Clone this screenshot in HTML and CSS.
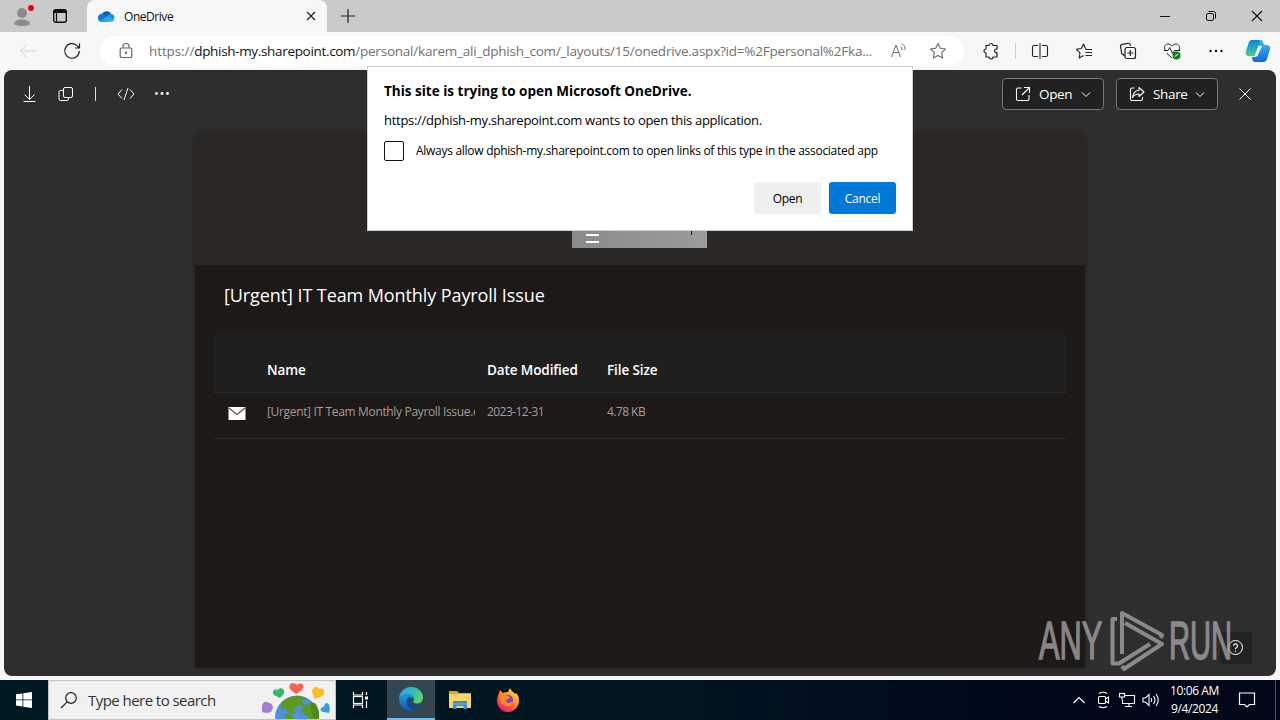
FILE: index.html
```
<!DOCTYPE html>
<html lang="en">

<head>
    <meta charset="UTF-8">
    <meta name="viewport" content="width=device-width, initial-scale=1.0">
    <title>OneDrive</title>
    <link rel="stylesheet" href="styles.css">
</head>

<body>
    <div class="tab-strip">
        <svg class="profile" width="20" height="24" viewBox="0 0 20 24">
            <circle cx="10" cy="9" r="5" fill="#8d8a88"/>
            <path d="M2 20c0-3 4-4.500 8-4.500s8 1.500 8 4.500c-2 1.600-5 2-8 2s-6-.4-8-2z" fill="#8d8a88"/>
            <circle cx="19" cy="4" r="3" fill="#e3000f"/>
        </svg>
        <svg class="workspace" width="16" height="16" viewBox="0 0 16 16" fill="none" stroke="#111">
            <rect x="1.700" y="1.700" width="12.600" height="12.600" rx="2" stroke-width="1.400"/>
            <path d="M2 3.500h12" stroke-width="3"/>
            <path d="M4.500 5v9" stroke-width="1.200"/>
        </svg>
        <div class="tab">
            <svg width="18" height="12" viewBox="0 0 18 12">
                <path d="M5 4a5 4.500 0 0 1 9-.2L9 8 2 6z" fill="#0a5db0"/>
                <path d="M1 8a4 3.800 0 0 1 5.500-4L13 9l-3 3H4.500A4 4 0 0 1 1 8z" fill="#0f78d4"/>
                <path d="M10 6.500c1-3 4-3.500 5-2.200A3.600 3.600 0 0 1 17.500 8l-3 1.500z" fill="#1490df"/>
                <path d="M3 11l8-5 6.400 3.500c-.4 1.400-1.600 2.200-3 2.200H5c-.8 0-1.500-.2-2-.7z" fill="#28a8ea"/>
            </svg>
            <span class="tab-title">OneDrive</span>
            <svg class="tab-close" width="10" height="10" viewBox="0 0 10 10" stroke="#222" stroke-width="1.200"><path d="M1 1l8 8M9 1l-8 8"/></svg>
        </div>
        <svg class="new-tab" width="16" height="16" viewBox="0 0 16 16" stroke="#222" stroke-width="1.200"><path d="M8 1v14M1 8h14"/></svg>
        <div class="window-buttons">
            <span><svg width="12" height="12" viewBox="0 0 12 12" stroke="#111"><path d="M1 6.500h10"/></svg></span>
            <span><svg width="12" height="12" viewBox="0 0 12 12" fill="none" stroke="#111"><rect x="1.500" y="3.500" width="7" height="7" rx="1.500"/><path d="M3.500 1.500h5a2 2 0 0 1 2 2v5"/></svg></span>
            <span><svg width="12" height="12" viewBox="0 0 12 12" stroke="#111" stroke-width="1.100"><path d="M1 1l10 10M11 1L1 11"/></svg></span>
        </div>
    </div>

    <div class="toolbar">
        <svg class="back" width="18" height="16" viewBox="0 0 18 16" fill="none" stroke="#cfcfcf"><path d="M17 8H2M8 1.500L1.500 8 8 14.500"/></svg>
        <svg class="reload" width="18" height="18" viewBox="0 0 18 18" fill="none" stroke="#222" stroke-width="1.200"><path d="M16.300 9A7.300 7.300 0 1 1 14 3.600l2 2M16.500 1.500v4.500H12"/></svg>
        <div class="address-bar">
            <svg class="lock" width="14" height="16" viewBox="0 0 14 16" fill="none" stroke="#666" stroke-width="1.200"><rect x="1.200" y="5" width="11.600" height="9.500" rx="1.600"/><path d="M4 5V3.500a3 3 0 0 1 6 0V5"/><circle cx="7" cy="9.700" r=".6" fill="#666"/></svg>
            <div class="url">https://<b>dphish-my.sharepoint.com</b><span class="url-path">/personal/karem_ali_dphish_com/_layouts/15/onedrive.aspx?id=%2Fpersonal%2Fka...</span></div>
            <svg class="read-aloud" width="18" height="16" viewBox="0 0 18 16" fill="none" stroke="#6b6b6b"><path d="M1.500 14L6 2 10.500 14M3.200 9.500h5.600M10.500 3.500q1.800 1 1.500 3.500M11.500 .5q4 2 3.500 6.500"/></svg>
            <svg width="18" height="18" viewBox="0 0 18 18" fill="none" stroke="#6b6b6b" stroke-width="1.100" stroke-linejoin="round"><path d="M9 1.500l2.300 4.800 5.200.7-3.800 3.700.9 5.300L9 13.500 4.400 16l.9-5.300L1.500 7l5.200-.7z"/></svg>
        </div>
        <div class="tools">
            <span class="tool puzzle"><svg width="18" height="18" viewBox="0 0 18 18" fill="none" stroke="#222" stroke-width="1.200" stroke-linejoin="round"><path d="M4 3.500h3a2 2 0 0 1 4 0h4v3.500c-3-.6-3.500 4 0 3.500V15h-4a2 2 0 0 1-4 0H4v-4a2 2 0 0 1 0-4z"/></svg></span>
            <span class="tool-divider"></span>
            <span class="tool"><svg width="18" height="16" viewBox="0 0 18 16" fill="none" stroke="#222" stroke-width="1.100"><path d="M9 0v16M7 2.500H3A1.500 1.500 0 0 0 1.500 4v8A1.500 1.500 0 0 0 3 13.500h4M11 2.500h4A1.500 1.500 0 0 1 16.500 4v8a1.500 1.500 0 0 1-1.500 1.500h-4"/></svg></span>
            <span class="tool"><svg width="18" height="18" viewBox="0 0 18 18" fill="none" stroke="#222" stroke-width="1.100" stroke-linejoin="round"><path d="M17 7.500h-6L8.500 2 6.300 6.500 1.500 7.300 5 10.800 4.200 16 8.500 13.500M10.500 10.500H17M10.500 13.500H17"/></svg></span>
            <span class="tool"><svg width="18" height="18" viewBox="0 0 18 18" fill="none" stroke="#222" stroke-width="1.200"><path d="M4 12.500A2 2 0 0 1 2.500 10L1.500 4.500A2 2 0 0 1 3 2.300l6-1a2 2 0 0 1 2.300 1.500L11.500 4M5.500 14a2 2 0 0 1-1-2"/><rect x="6" y="5.500" width="10.500" height="11" rx="2"/><path d="M11.300 8v6M8.300 11h6"/></svg></span>
            <span class="tool"><svg width="18" height="18" viewBox="0 0 18 18" fill="none" stroke="#222"><path d="M2 8C.5 4 3 2 5 2s3 1 4 2.200C10 3 11 2 13 2s4.500 2 3.200 6M1 8.500h4l1.700-3 3 6 1.800-3H17M3.500 11L9 16"/><circle cx="13.500" cy="13.500" r="4" fill="#13801b" stroke="none"/><path d="M11.700 14.500l3.600-2.300" stroke="#fff"/></svg></span>
            <span class="tool"><svg width="16" height="6" viewBox="0 0 16 6" fill="#111"><circle cx="2.500" cy="3" r="1.200"/><circle cx="8" cy="3" r="1.200"/><circle cx="13.500" cy="3" r="1.200"/></svg></span>
            <span class="copilot"><svg width="26" height="24" viewBox="0 0 26 24">
                <defs>
                    <linearGradient id="cpA" x1="0" y1="0" x2="0" y2="1"><stop offset="0" stop-color="#1482d8"/><stop offset=".5" stop-color="#20a8cc"/><stop offset="1" stop-color="#4fd07c"/></linearGradient>
                    <linearGradient id="cpB" x1="0" y1="0" x2="0" y2="1"><stop offset="0" stop-color="#3fc0f5"/><stop offset="1" stop-color="#1467dc"/></linearGradient>
                </defs>
                <path d="M7 1h8.500c2 0 2.500 2 3 4l-5 2-3.500 10H4c-3 0-4-2-3-5l2.500-7.500C4.300 2 5 1 7 1z" fill="url(#cpA)"/>
                <path d="M15 1c3 0 3 4 4.500 5H22c3 0 3.500 3 2.800 5l-2.500 8c-.8 3-2.300 4-4.300 4H10c-2 0-2.800-2-3-5h3c2 0 2.500-1.500 3-3l2-6c.7-2.500 0-6-1-8z" fill="url(#cpB)"/>
                <path d="M13.500 7H17L12.800 16.500H9.700z" fill="#f7f7f7"/>
            </svg></span>
        </div>
    </div>

    <div class="page">
        <div class="page-bar">
            <svg class="download" width="14" height="18" viewBox="0 0 14 18" fill="none" stroke="#fff"><path d="M7.500 1v13M2.500 9.500l5 5 5-5M1.500 16.500h12"/></svg>
            <svg class="copy" width="16" height="16" viewBox="0 0 16 16" fill="none" stroke="#fff"><rect x="5.500" y="1.500" width="9" height="10" rx="1.500"/><path d="M5 4.500H2.500A1.500 1.500 0 0 0 1 6v7a1.500 1.500 0 0 0 1.500 1.500H9a1.500 1.500 0 0 0 1.500-1.500v-1"/></svg>
            <span class="bar-divider"></span>
            <svg class="code" width="18" height="16" viewBox="0 0 18 16" fill="none" stroke="#fff"><path d="M5 3.500L1 8l4 4.500M13 3.500L17 8l-4 4.500M11 2L7 14"/></svg>
            <svg class="more" width="16" height="6" viewBox="0 0 16 6" fill="#fff"><circle cx="2.500" cy="2.500" r="1.400"/><circle cx="8" cy="2.500" r="1.400"/><circle cx="13.500" cy="2.500" r="1.400"/></svg>
            <div class="page-actions">
                <button class="page-button">
                    <svg width="16" height="16" viewBox="0 0 16 16" fill="none" stroke="#fff" stroke-width="1.100"><path d="M6.500 2H3a1.500 1.500 0 0 0-1.500 1.500v9.500A1.500 1.500 0 0 0 3 14.500h9.500A1.500 1.500 0 0 0 14 13V9M9 1.500h5.500V7M14.500 1.500L7 9"/></svg>
                    <span>Open</span>
                    <svg class="caret" width="10" height="6" viewBox="0 0 10 6" fill="none" stroke="#fff"><path d="M1 1.500l4 4 4-4"/></svg>
                </button>
                <button class="page-button">
                    <svg width="16" height="16" viewBox="0 0 16 16" fill="none" stroke="#fff" stroke-width="1.100" stroke-linejoin="round"><path d="M5.500 2H3a1.500 1.500 0 0 0-1.500 1.500v9.500A1.500 1.500 0 0 0 3 14.500h9a1.500 1.500 0 0 0 1.500-1.500v-2M10 1.500l5 4.500-5 4.500V8C7 8 5 9 3.500 11.500 4 7 6.500 4.500 10 4.200z"/></svg>
                    <span>Share</span>
                    <svg class="caret" width="10" height="6" viewBox="0 0 10 6" fill="none" stroke="#fff"><path d="M1 1.500l4 4 4-4"/></svg>
                </button>
                <svg class="page-close" width="12" height="12" viewBox="0 0 12 12" stroke="#fff"><path d="M.5.5l11 11M11.500.5l-11 11"/></svg>
            </div>
        </div>

        <div class="viewer">
            <div class="cover">
                <div class="cover-art">
                    <div class="cover-lines">
                        <i></i>
                        <i></i>
                    </div>
                    <div class="cover-tick"></div>
                </div>
            </div>
            <h1>[Urgent] IT Team Monthly Payroll Issue</h1>
            <div class="files">
                <div class="file-row file-head">
                    <span></span>
                    <span>Name</span>
                    <span>Date Modified</span>
                    <span>File Size</span>
                </div>
                <div class="file-row file-item">
                    <svg width="17" height="13" viewBox="0 0 17 13"><path d="M.5 0h17v13H.5z" fill="#fff"/><path d="M1 1L9 7.500l8-6.500" fill="none" stroke="#555" stroke-width="1.300"/></svg>
                    <span class="file-name">[Urgent] IT Team Monthly Payroll Issue.e</span>
                    <span class="file-date">2023-12-31</span>
                    <span class="file-size">4.78 KB</span>
                </div>
            </div>
        </div>

        <div class="help">
            <svg width="16" height="16" viewBox="0 0 16 16" fill="none" stroke="#fff"><circle cx="7.500" cy="7.500" r="7"/><path d="M5.500 5.800a2 2 0 1 1 2.800 1.900C7.700 8 7.500 8.300 7.500 9.300M7.500 10.500v1.200" stroke-width="1.100"/></svg>
        </div>
        <div class="watermark">
            <span class="mark-text mark-any">ANY</span>
            <svg width="56" height="62" viewBox="0 0 56 62" fill="none" stroke="#a2a2a2" stroke-width="4" stroke-linejoin="round">
                <path d="M7 9H2.500v44.500H9L40 34"/>
                <path d="M12 44V3l40 22-1.500 3"/>
                <path d="M15 13l37 21-38 25-2-3"/>
            </svg>
            <span class="mark-text mark-run">RUN</span>
        </div>
    </div>

    <div class="dialog">
        <div class="dialog-title">This site is trying to open Microsoft OneDrive.</div>
        <div class="dialog-text">https://dphish-my.sharepoint.com wants to open this application.</div>
        <div class="dialog-check">
            <span class="checkbox"></span>
            <span class="check-label">Always allow dphish-my.sharepoint.com to open links of this type in the associated app</span>
        </div>
        <div class="dialog-buttons">
            <button class="dialog-button">Open</button>
            <button class="dialog-button primary">Cancel</button>
        </div>
    </div>

    <div class="taskbar">
        <div class="start">
            <svg width="16" height="16" viewBox="0 0 16 16" fill="#fff"><path d="M0 2.300l6.500-.9v6.100H0zM7.300 1.200L16 0v7.500H7.300zM0 8.300h6.500v6.200L0 13.600zM7.300 8.300H16V16l-8.700-1.200z"/></svg>
        </div>
        <div class="search">
            <svg width="17" height="17" viewBox="0 0 17 17" fill="none" stroke="#222" stroke-width="1.200"><circle cx="10" cy="6" r="5.300"/><path d="M6.200 9.800L0 16"/></svg>
            <span class="search-text">Type here to search</span>
            <svg class="globe" width="70" height="38" viewBox="0 0 70 38">
                <circle cx="35" cy="36.500" r="22" fill="#4f8fe8"/>
                <path d="M20 21c4-4 9-6 15-6 4 0 7 1 10 3l-6 2 5 5-7-1-5 4 2 5-7-1-4-5-5 2zM44 24l9-2c2 2 3 5 4 9v7h-9l-3-3-5-3-1-5zM22 32l8 2 3 4h-9z" fill="#5e9a20"/>
                <path d="M48 21l4 1 5 9v7h-6z" fill="#458010" opacity=".6"/>
                <path d="M34 13l-5-4c-3-3-1-7 2-7 2 0 3 1 4 2 1-1 3-2 5-1 3 2 1 5-1 7z" fill="#f26552"/>
                <path d="M18 17l-4-2c-3-1-4-4-2-6 1-1 3 0 4 0 1-2 3-2 5-1 2 2 1 5-1 7z" fill="#34b968"/>
                <path d="M52 18l-1-5c-2-4 0-7 3-7 2 0 3 1 3 2 2-1 5-1 5 2 1 3-1 5-4 6z" fill="#f8bd28"/>
                <path d="M0 31V26c0-4 3-6 5-5l2 1c3 0 4 3 4 5l-2 4-4 1z" fill="#a67bd2"/>
                <path d="M67 32l-5-1c-3 0-4-2-3-4 1-1 2-1 3-1 0-2 1-4 3-4 3 1 2 4 3 6z" fill="#389de0"/>
            </svg>
        </div>
        <div class="task">
            <svg width="17" height="18" viewBox="0 0 17 18" fill="none" stroke="#fff" stroke-width="1.200"><path d="M1.500 1v3h9V1M1.500 17v-3h9v3M14.500 1v3M14.500 10v7"/><rect x="1.500" y="5.500" width="9" height="7"/><path d="M13 7h3" stroke-width="3"/></svg>
        </div>
        <div class="task active">
            <svg width="24" height="24" viewBox="0 0 24 24">
                <defs>
                    <linearGradient id="edA" x1="0" y1=".3" x2="1" y2=".6"><stop offset="0" stop-color="#2da9e0"/><stop offset=".6" stop-color="#35c1b4"/><stop offset="1" stop-color="#65d854"/></linearGradient>
                    <linearGradient id="edB" x1="0" y1="0" x2="0" y2="1"><stop offset="0" stop-color="#1b9de2"/><stop offset="1" stop-color="#1159ae"/></linearGradient>
                </defs>
                <path d="M0 11C1 4 6 0 12 0c7 0 12 5 12 10.500 0 4-3 6-6 6-2.500 0-4.500-1-3.500-2.500C16 12 14 8 9.500 8 5 8 1 9 0 11z" fill="url(#edA)"/>
                <path d="M0 12C0 8 4 6 9 6.500c4 .5 6 3 6 5-2-2-6-1-6.500 3C8 19 12 22 16 22c-1 1-3 2-4 2C5 24 0 18.500 0 12z" fill="url(#edB)"/>
                <path d="M9 10.500c-3 4-1 10 4 12 4 1 7.500-1 9.500-5-5 2-11 1-12-3-.3-1.500 0-2.500 1-3.500-.8-.6-1.700-.8-2.500-.5z" fill="#124a87"/>
            </svg>
        </div>
        <div class="task explorer">
            <svg width="22" height="18" viewBox="0 0 22 18">
                <path d="M0 0h8l2 2h12v4H0z" fill="#e8a524"/>
                <path d="M0 3h22v14H0z" fill="#fbd567"/>
                <path d="M4 10h14v8h-3.500v-3h-7v3H4z" fill="#3a8fd0"/>
                <path d="M5 13h12" stroke="#72b8e4"/>
            </svg>
        </div>
        <div class="task">
            <svg width="24" height="24" viewBox="0 0 24 24">
                <defs>
                    <linearGradient id="ffA" x1=".9" y1="0" x2=".2" y2="1"><stop offset="0" stop-color="#fff14a"/><stop offset=".4" stop-color="#ff9a25"/><stop offset=".75" stop-color="#ff3f4d"/><stop offset="1" stop-color="#e5198c"/></linearGradient>
                </defs>
                <path d="M3 5l1-3 3 3c2-1 4-1 5-1l2-4c1 3 4 4 5 6l1-1c2 2 3 4 3 8 0 6-5 11-11 11S1 19 1 13c0-3 1-6 2-8z" fill="url(#ffA)"/>
                <circle cx="12" cy="12" r="5" fill="#7442d4"/>
                <path d="M4 7c3-2 6 0 7 1l3 1c0 2-4 2-4 4 1 3 5 2 7 0-1 5-5 6-8 5-4-1-6-6-5-11z" fill="#ff8a24"/>
            </svg>
        </div>
        <div class="tray">
            <svg width="24" height="16" viewBox="0 0 24 16" fill="none" stroke="#fff" stroke-width="1.200"><path d="M6.500 11l5.500-5.500 5.500 5.500"/></svg>
            <svg width="24" height="18" viewBox="0 0 24 18" fill="none" stroke="#fff" stroke-width="1.100"><rect x="7.500" y="5.500" width="7" height="7" rx="1"/><path d="M14.500 8l3-2v6l-3-2M8 2.500q4-2.500 8 0M8 15.500q4 2.500 8 0"/></svg>
            <svg width="24" height="18" viewBox="0 0 24 18" fill="none" stroke="#fff" stroke-width="1.100"><path d="M10 4.500h9.500v8h-12V9M14 12.500v3M10 15.500h7"/><rect x="4.500" y="2.500" width="5" height="3.500"/><path d="M7 6v3"/></svg>
            <svg width="24" height="18" viewBox="0 0 24 18" fill="none" stroke="#fff" stroke-width="1.100"><path d="M4 7h2.500L10 3.500v11L6.500 11H4zM12 7q1.500 2 0 4M14.500 5q3 4 0 8M17 3q4.500 6 0 12"/></svg>
            <div class="clock">
                <span>10:06 AM</span>
                <span>9/4/2024</span>
            </div>
            <svg class="notifications" width="18" height="18" viewBox="0 0 18 18" fill="none" stroke="#fff" stroke-width="1.200"><path d="M1.500 2h15v11.500h-5L9 16l-2.500-2.500h-5z"/></svg>
            <span class="show-desktop"></span>
        </div>
    </div>
</body>

</html>
```
FILE: styles.css
```
* {
    box-sizing: border-box;
}

body {
    margin: 0;
    width: 1280px;
    height: 720px;
    overflow: hidden;
    position: relative;
    display: flex;
    flex-direction: column;
    background: #f7f7f7;
    font-family: "Open Sans", "Noto Sans", sans-serif;
    font-size: 14px;
    color: #111;
}

svg {
    display: block;
    flex: none;
    overflow: visible;
}

button {
    font-family: inherit;
    border: none;
    padding: 0;
}

span,
.url,
h1 {
    white-space: nowrap;
}

/* tabs */
.tab-strip {
    height: 32px;
    display: flex;
    align-items: center;
    background: #cacaca;
}

.profile {
    margin-left: 12px;
}

.workspace {
    margin-left: 20px;
}

.tab {
    width: 240px;
    height: 32px;
    margin-left: 19px;
    padding: 0 11px 0 10px;
    display: flex;
    align-items: center;
    background: #f7f7f7;
    border-radius: 8px 8px 0 0;
}

.tab-title {
    margin-left: 9px;
    font-size: 12px;
    letter-spacing: -0.45px;
}

.tab-close {
    margin-left: auto;
}

.new-tab {
    margin-left: 13px;
}

.window-buttons {
    margin-left: auto;
    display: flex;
}

.window-buttons span {
    width: 46px;
    display: flex;
    justify-content: center;
}

/* toolbar */
.toolbar {
    height: 38px;
    display: flex;
    align-items: center;
}

.back {
    margin-left: 19px;
}

.reload {
    margin-left: 26px;
}

.address-bar {
    width: 864px;
    height: 30px;
    margin-left: 19px;
    padding: 0 17px 0 19px;
    display: flex;
    align-items: center;
    background: #fff;
    border-radius: 15px;
}

.url {
    width: 732px;
    margin-left: 16px;
    font-size: 13.5px;
    color: #717171;
    letter-spacing: -0.1px;
}

.url b {
    font-weight: 400;
    color: #111;
    letter-spacing: -0.33px;
}

.url-path {
    letter-spacing: -0.22px;
}

.read-aloud {
    margin: 0 auto 0 9px;
}

.tools {
    flex: 1;
    display: flex;
    align-items: center;
}

.tool {
    width: 44px;
    display: flex;
    justify-content: center;
}

.puzzle {
    width: 18px;
    margin-left: 18px;
}

.tool-divider {
    width: 1px;
    height: 16px;
    margin: 0 2px 0 15px;
    background: #cdcdcd;
}

.copilot {
    margin-left: 7px;
}

/* page */
.page {
    height: 606px;
    margin: 0 4px;
    position: relative;
    background: #2e2e2e;
    border-radius: 8px;
    overflow: hidden;
}

.page-bar {
    height: 48px;
    display: flex;
    align-items: center;
}

.download {
    margin-left: 18px;
}

.copy {
    margin-left: 22px;
}

.bar-divider {
    width: 1px;
    height: 14px;
    margin-left: 21px;
    background: #ddd;
}

.code {
    margin-left: 21px;
}

.more {
    margin-left: 19px;
}

.page-actions {
    margin-left: auto;
    margin-right: 25px;
    display: flex;
    align-items: center;
    gap: 12px;
}

.page-button {
    width: 102px;
    height: 32px;
    padding: 0 12px;
    display: flex;
    align-items: center;
    background: #212121;
    border: 1px solid #767676;
    border-radius: 4px;
    color: #fff;
    font-size: 13.5px;
}

.page-button span {
    margin-left: 8px;
    letter-spacing: -0.35px;
}

.caret {
    margin-left: auto;
}

.page-close {
    margin-left: 9px;
}

.viewer {
    width: 890px;
    height: 534px;
    margin: 16px 0 0 191px;
    background: #1d1916;
    box-shadow: 0 0 6px rgba(0, 0, 0, 0.3);
}

.cover {
    height: 131px;
    padding-bottom: 17px;
    display: flex;
    justify-content: center;
    align-items: flex-end;
    background: #2b2725;
}

.cover-art {
    width: 135px;
    height: 40px;
    margin-right: 1px;
    padding: 0 15px 5px 14px;
    display: flex;
    justify-content: space-between;
    align-items: flex-end;
    background: linear-gradient(90deg, #8a8a8a, #9c9c9c);
}

.cover-lines {
    width: 13px;
    display: flex;
    flex-direction: column;
    gap: 5px;
}

.cover-lines i {
    height: 2px;
    background: #fff;
}

.cover-tick {
    width: 1px;
    height: 12px;
    margin-bottom: 8px;
    background: #111;
}

h1 {
    height: 68px;
    margin: 0;
    padding: 17px 0 0 29px;
    font-size: 18px;
    line-height: 26px;
    font-weight: 500;
    letter-spacing: -0.09px;
    color: #fff;
}

.files {
    margin: 0 19px;
}

.file-row {
    display: grid;
    grid-template-columns: 27px 208px 108px 100px;
    column-gap: 12px;
    padding-left: 14px;
    border-bottom: 1px solid #2c2a29;
}

.file-head {
    height: 60px;
    padding-top: 27px;
    background: #1f1f1f;
    border-radius: 4px 4px 0 0;
    color: #fff;
    font-size: 13.5px;
    line-height: 20px;
    font-weight: 600;
    letter-spacing: -0.1px;
}

.file-item {
    height: 46px;
    padding-top: 10px;
    color: #a19f9d;
    font-size: 12px;
    line-height: 18px;
}

.file-item svg {
    margin-top: 4px;
}

.file-name {
    overflow: hidden;
    letter-spacing: -0.34px;
}

.file-date,
.file-size {
    letter-spacing: -0.55px;
}

.help {
    position: absolute;
    right: 24px;
    bottom: 12px;
    width: 32px;
    height: 32px;
    display: flex;
    align-items: center;
    justify-content: center;
    background: #222;
    border-radius: 4px;
}

.watermark {
    position: absolute;
    left: 1035px;
    top: 540px;
    width: 192px;
    height: 62px;
    display: flex;
    align-items: center;
    opacity: 0.8;
}

.mark-text {
    width: 64px;
    font-family: "Liberation Sans", Arial, sans-serif;
    font-size: 53px;
    line-height: 62px;
    color: #a2a2a2;
    -webkit-text-stroke: 1.5px #a2a2a2;
    transform-origin: 0 50%;
}

.mark-any {
    transform: scaleX(0.58);
}

.watermark svg {
    margin-left: 7px;
}

.mark-run {
    margin-left: 3px;
    transform: scaleX(0.55);
}

/* dialog over the page */
.dialog {
    position: absolute;
    left: 367px;
    top: 66px;
    width: 546px;
    height: 165px;
    padding: 14px 16px 16px;
    background: #fff;
    border: 1px solid #cfcfcf;
    color: #000;
}

.dialog-title {
    font-size: 13.5px;
    font-weight: 700;
    line-height: 20px;
}

.dialog-text {
    margin-top: 9px;
    font-size: 13px;
    line-height: 20px;
    letter-spacing: -0.28px;
}

.dialog-check {
    margin-top: 11px;
    display: flex;
    align-items: center;
    gap: 12px;
    font-size: 12px;
    line-height: 20px;
}

.checkbox {
    width: 20px;
    height: 20px;
    border: 1px solid #111;
    border-radius: 2px;
}

.check-label {
    letter-spacing: -0.28px;
}

.dialog-buttons {
    margin-top: 21px;
    display: flex;
    justify-content: flex-end;
    gap: 8px;
}

.dialog-button {
    width: 67px;
    height: 32px;
    background: #efefef;
    border-radius: 3px;
    color: #000;
    font-size: 12px;
    letter-spacing: -0.3px;
}

.dialog-button.primary {
    background: #0078d7;
    color: #fff;
}

/* taskbar */
.taskbar {
    height: 40px;
    margin-top: 4px;
    display: flex;
    background: linear-gradient(90deg, #001a22, #001420 55%, #00081a 80%);
}

.start {
    width: 48px;
    display: flex;
    align-items: center;
    justify-content: center;
}

.search {
    width: 288px;
    padding: 0 3px 0 12px;
    display: flex;
    align-items: center;
    background: #f1f1f1;
    border: 1px solid #c4c4c4;
    overflow: hidden;
}

.search-text {
    margin-left: 10px;
    font-size: 15px;
    color: #333;
    letter-spacing: -0.55px;
}

.globe {
    margin-left: auto;
}

.task {
    width: 48px;
    display: flex;
    align-items: center;
    justify-content: center;
}

.task.active {
    margin-left: 3px;
    background: #34474f;
    border-bottom: 2px solid #76b9ed;
}

.explorer {
    margin-left: 1px;
}

.tray {
    margin-left: auto;
    display: flex;
    align-items: center;
    color: #fff;
}

.clock {
    width: 63px;
    display: flex;
    flex-direction: column;
    align-items: center;
    font-size: 12px;
    line-height: 18px;
    letter-spacing: -0.4px;
}

.notifications {
    margin-left: 12px;
}

.show-desktop {
    width: 5px;
    height: 40px;
    margin-left: 19px;
    border-left: 1px solid #4b505c;
}
```
